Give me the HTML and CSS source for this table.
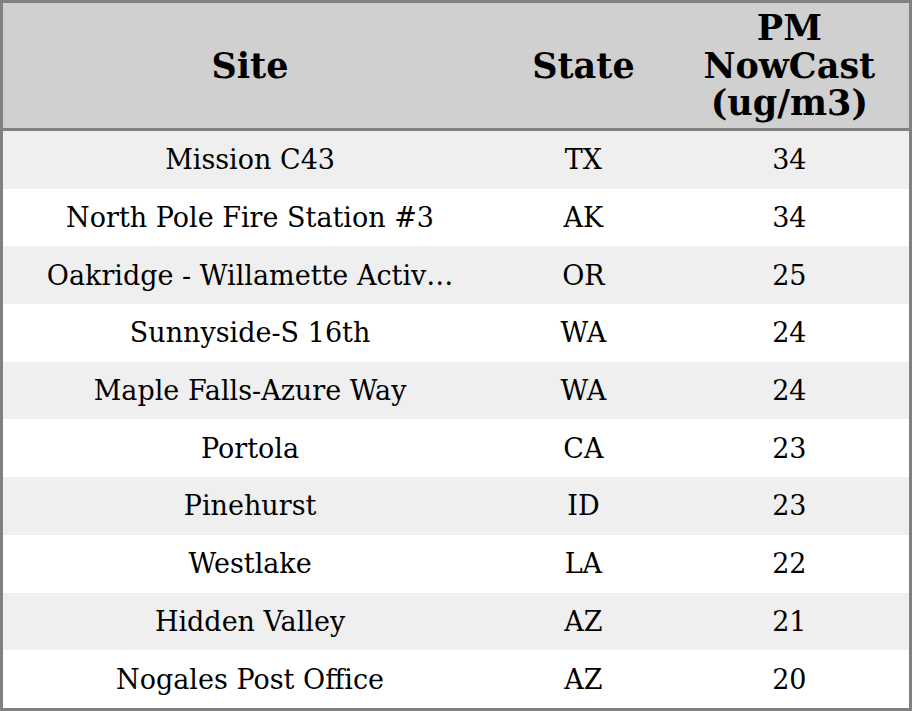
FILE: index.html
```html
<!DOCTYPE html>
<html>
<head>
<meta charset="utf-8">
<link rel="stylesheet" href="styles.css">
</head>
<body>
<table class="aq-table">
  <colgroup>
    <col class="col-site">
    <col class="col-state">
    <col class="col-pm">
  </colgroup>
  <thead>
    <tr><th>Site</th><th>State</th><th>PM<br>NowCast<br>(ug/m3)</th></tr>
  </thead>
  <tbody>
    <tr><td>Mission C43</td><td>TX</td><td>34</td></tr>
    <tr><td>North Pole Fire Station #3</td><td>AK</td><td>34</td></tr>
    <tr><td>Oakridge - Willamette Activ…</td><td>OR</td><td>25</td></tr>
    <tr><td>Sunnyside-S 16th</td><td>WA</td><td>24</td></tr>
    <tr><td>Maple Falls-Azure Way</td><td>WA</td><td>24</td></tr>
    <tr><td>Portola</td><td>CA</td><td>23</td></tr>
    <tr><td>Pinehurst</td><td>ID</td><td>23</td></tr>
    <tr><td>Westlake</td><td>LA</td><td>22</td></tr>
    <tr><td>Hidden Valley</td><td>AZ</td><td>21</td></tr>
    <tr><td>Nogales Post Office</td><td>AZ</td><td>20</td></tr>
  </tbody>
</table>
</body>
</html>
```

FILE: styles.css
```css
html, body {
  margin: 0;
  padding: 0;
  background: #ffffff;
}
.aq-table {
  width: 912px;
  height: 711px;
  border-collapse: collapse;
  border: 3px solid #808080;
  table-layout: fixed;
  font-family: "DejaVu Serif", serif;
  color: #000;
}
.col-site { width: 494px; }
.col-state { width: 172px; }
.col-pm { width: 240px; }
.aq-table thead tr {
  height: 128px;
}
.aq-table th {
  background: #d0d0d0;
  font-size: 35px;
  font-weight: bold;
  line-height: 37.5px;
  padding: 0;
  text-align: center;
  vertical-align: middle;
  border-bottom: 3px solid #808080;
}
.aq-table td {
  font-size: 27px;
  line-height: 31px;
  padding: 0;
  text-align: center;
  vertical-align: middle;
  white-space: nowrap;
  height: 57.7px;
}
.aq-table tbody tr:nth-child(odd) {
  background: #efefef;
}
.aq-table tbody tr:nth-child(even) {
  background: #ffffff;
}
```
